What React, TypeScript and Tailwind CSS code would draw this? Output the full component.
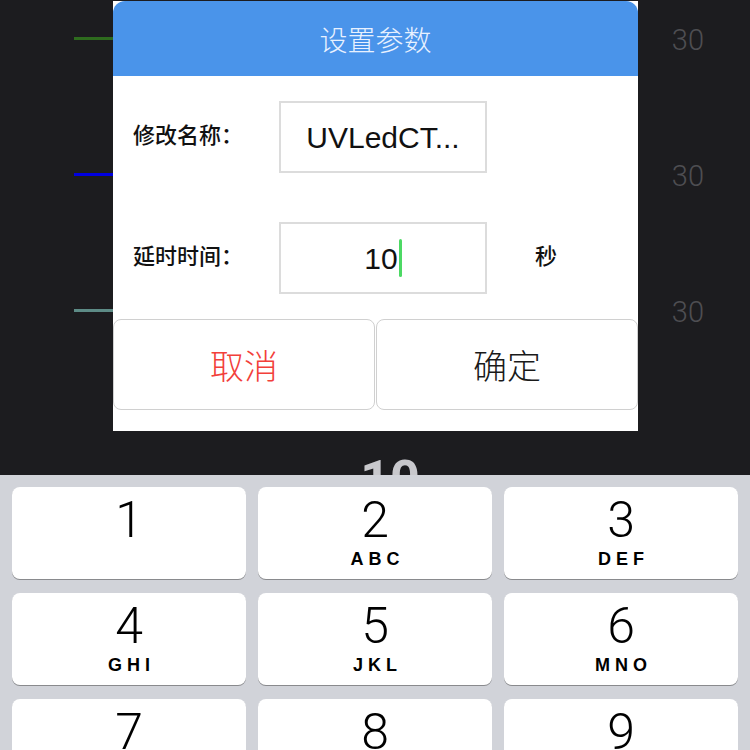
import React from "react";

const keys: [string, string][] = [
  ["1", ""],
  ["2", "ABC"],
  ["3", "DEF"],
  ["4", "GHI"],
  ["5", "JKL"],
  ["6", "MNO"],
  ["7", "PQRS"],
  ["8", "TUV"],
  ["9", "WXYZ"],
];

const cjk = { fontFamily: '"Noto Sans CJK SC", "Noto Sans", sans-serif' };
const latin = { fontFamily: 'Roboto, "Noto Sans CJK SC", sans-serif' };
const helv = { fontFamily: '"Liberation Sans", Arial, "Noto Sans CJK SC", sans-serif' };

function ChartRow({ color }: { color: string }) {
  return (
    <div className="flex h-[20px] items-center pl-[74px] pr-[46px]">
      <div className={`h-[3px] w-[200px] ${color}`} />
      <div className="ml-auto mt-[5px] text-[29px] font-light leading-none text-[#4e4e52]" style={latin}>
        30
      </div>
    </div>
  );
}

export default function App() {
  return (
    <div className="relative flex h-[750px] w-[750px] flex-col overflow-hidden bg-[#1c1c1f]">
      {/* background content, cut off by the keyboard */}
      <div className="h-[475px] shrink-0 overflow-hidden">
        <div className="flex flex-col gap-[116px] pt-[28px]">
          <ChartRow color="bg-[#2e6b1e]" />
          <ChartRow color="bg-[#0000e0]" />
          <ChartRow color="bg-[#5d8b86]" />
        </div>
        <div className="mt-[134px] flex justify-center pl-[30px] text-[52px] font-bold leading-none text-[#c8c8cc]" style={latin}>
          10
        </div>
      </div>

      {/* keyboard */}
      <div className="flex-1 bg-[#d1d3d9] px-[12px] pt-[12px]">
        <div className="grid grid-cols-3 gap-x-[12px] gap-y-[14px]">
          {keys.map(([d, l]) => (
            <div
              key={d}
              className="flex h-[92px] flex-col items-center rounded-[8px] bg-white pt-[8px] shadow-[0_1px_0_#898a8d]"
            >
              <div className="text-[50px] font-light leading-[50px] text-black" style={latin}>
                {d}
              </div>
              <div
                className="mt-[4px] pl-[5px] text-[18px] font-bold leading-[20px] tracking-[5px] text-black"
                style={helv}
              >
                {l}
              </div>
            </div>
          ))}
        </div>
      </div>

      {/* dialog */}
      <div className="absolute left-[113px] top-[1px] flex w-[525px] flex-col bg-white">
        <div
          className="flex h-[75px] items-center justify-center rounded-t-[12px] bg-[#4a94ea] text-[28px] font-light text-[#e8f1ff]"
          style={cjk}
        >
          设置参数
        </div>
        <div className="flex flex-col px-0 pb-[21px] pt-[25px]">
          <div className="flex h-[72px] items-center pl-[20px]">
            <div className="w-[146px] pb-[8px] text-[22px] font-medium text-[#111]" style={cjk}>
              修改名称：
            </div>
            <div className="flex h-[72px] w-[208px] items-center justify-center border-2 border-[#dcdcdc] text-[30px] text-[#111]" style={helv}>
              UVLedCT...
            </div>
          </div>
          <div className="mt-[49px] flex h-[72px] items-center pl-[20px]">
            <div className="w-[146px] pb-[8px] text-[22px] font-medium text-[#111]" style={cjk}>
              延时时间：
            </div>
            <div className="flex h-[72px] w-[208px] items-center justify-center border-2 border-[#dcdcdc] text-[30px] text-[#111]" style={helv}>
              <span>10</span>
              <span className="ml-[1px] h-[38px] w-[3px] rounded-full bg-[#4cd964]" />
            </div>
            <div className="ml-[48px] pb-[8px] text-[22px] font-medium text-[#111]" style={cjk}>
              秒
            </div>
          </div>
          <div className="mt-[25px] flex h-[91px] gap-[1px]">
            <div
              className="flex flex-1 items-center justify-center rounded-[8px] border border-[#d0d0d0] text-[34px] font-light text-[#f2403a]"
              style={cjk}
            >
              取消
            </div>
            <div
              className="flex flex-1 items-center justify-center rounded-[8px] border border-[#d0d0d0] text-[34px] font-light text-[#1a1a1a]"
              style={cjk}
            >
              确定
            </div>
          </div>
        </div>
      </div>
    </div>
  );
}
